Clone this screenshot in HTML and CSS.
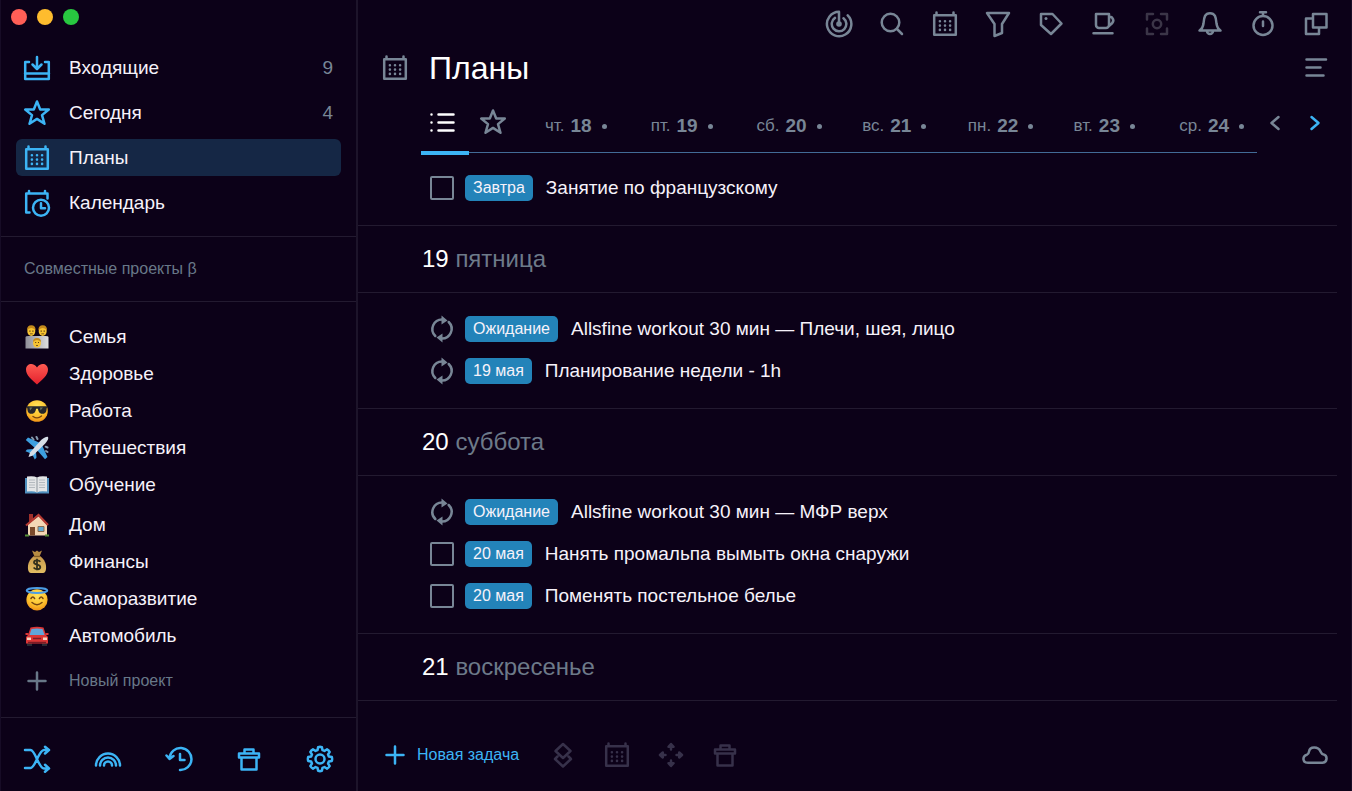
FILE: index.html
```html
<!DOCTYPE html>
<html lang="ru">
<head>
<meta charset="utf-8">
<meta name="viewport" content="width=device-width, initial-scale=1">
<title>Планы</title>
<link rel="stylesheet" href="styles.css">
</head>
<body>
<svg class="sprite" aria-hidden="true">
  <defs>
    <radialGradient id="g-face" cx=".5" cy=".3" r=".75"><stop offset="0" stop-color="#ffe45c"/><stop offset=".6" stop-color="#fdc12d"/><stop offset="1" stop-color="#ee8b13"/></radialGradient>
    <linearGradient id="g-heart" x2="0" y2="1"><stop offset="0" stop-color="#ff5b52"/><stop offset="1" stop-color="#e2202c"/></linearGradient>
    <linearGradient id="g-box" x2="1" y2="0"><stop offset="0" stop-color="#8f8f98"/><stop offset="1" stop-color="#dededf"/></linearGradient>
    <linearGradient id="g-bag" x2="0" y2="1"><stop offset="0" stop-color="#c99a4c"/><stop offset="1" stop-color="#e2bd62"/></linearGradient>
  </defs>
  <symbol id="i-inbox" viewBox="0 0 28 28"><path d="M6 8H2.200v17h23.600V8H22M2 19.500h24M14 3v11.500M9.500 10.500l4.500 4.500 4.500-4.500"/></symbol>
  <symbol id="i-star" viewBox="0 0 28 28"><path d="M14 2.500l3.200 8h8.600l-6.800 5.600 2.500 8.700-7.500-4.900-7.500 4.900L9 16.100 2.200 10.500h8.600z"/></symbol>
  <symbol id="i-calendar" viewBox="0 0 28 28"><path d="M3.200 5.200h21.600v19.600H3.200zM5.500 5V2.500M22.500 5V2.500"/><path class="dots" d="M8.900 11.300h0M14 11.300h0M19.100 11.300h0M8.900 15.600h0M14 15.600h0M19.100 15.600h0M8.900 19.900h0M14 19.900h0M19.100 19.900h0"/></symbol>
  <symbol id="i-clockcal" viewBox="0 0 28 28"><path d="M6.500 23.500H3.200V4.500h21.300v5M6 4.500V2M22 4.500V2"/><circle cx="18" cy="18.700" r="8"/><path d="M18 14.300v5h4"/></symbol>
  <symbol id="i-plus" viewBox="0 0 28 28"><path d="M14 5.500v17M5.500 14h17"/></symbol>
  <symbol id="i-shuffle" viewBox="0 0 28 28"><path d="M2 5h5.500c5 0 8 18.500 13.500 18.500h5M2 23h5.500C12.500 23 15.500 5 21 5h5M22 1.800L26 5l-4 3.500M22 19.800l4 3.600-4 3.400"/></symbol>
  <symbol id="i-rainbow" viewBox="0 0 28 28"><path d="M2 20.500a12 12 0 0 1 24 0M6 20.500a8 8 0 0 1 16 0M10 20.500a4 4 0 0 1 8 0"/></symbol>
  <symbol id="i-history" viewBox="0 0 28 28"><path d="M4.500 13a11 11 0 1 1 10.500 12M1.500 10.500l3 3.500L8.500 11M15 9v6h4.500"/></symbol>
  <symbol id="i-trash" viewBox="0 0 28 28"><path d="M4 8.500h20v4H4zM6.500 13v11.500h15V13M9.500 8V4.500h9V8"/></symbol>
  <symbol id="i-gear" viewBox="0 0 28 28"><path d="M12.100 2.150Q14 1.600 15.900 2.150L16.500 5.150 18.460 5.950 21.050 4.300Q22.800 5.200 23.700 6.950L22.050 9.540 22.850 11.500 25.850 12.100Q26.400 14 25.850 15.900L22.850 16.500 22.050 18.460 23.700 21.050Q22.800 22.800 21.050 23.700L18.460 22.050 16.500 22.850 15.900 25.850Q14 26.400 12.100 25.850L11.500 22.850 9.540 22.050 6.950 23.700Q5.200 22.800 4.300 21.050L5.950 18.460 5.150 16.500 2.150 15.900Q1.600 14 2.150 12.100L5.150 11.500 5.950 9.540 4.300 6.950Q5.200 5.200 6.950 4.300L9.540 5.950 11.500 5.150z"/><circle cx="14" cy="14" r="4.500"/></symbol>
  <symbol id="i-focus" viewBox="0 0 28 28"><path d="M22.700 5.300A12.200 12.200 0 1 1 14 1.800V14M18.500 8.200A7.300 7.300 0 1 1 10 7.900"/><circle class="solid" cx="14" cy="14" r="2.800"/></symbol>
  <symbol id="i-search" viewBox="0 0 28 28"><circle cx="12.500" cy="12.500" r="8.800"/><path d="M19 19l5 5"/></symbol>
  <symbol id="i-filter" viewBox="0 0 28 28"><path d="M3 3h22l-7 11v9l-7.500 3V14z"/></symbol>
  <symbol id="i-tag" viewBox="0 0 28 28"><path d="M4 4h11.500l9 9.500L14 24 4 15z"/><circle class="solid" cx="9" cy="8.500" r="1.500"/></symbol>
  <symbol id="i-cup" viewBox="0 0 28 28"><path d="M6 4h13v11a3 3 0 0 1-3 3H9a3 3 0 0 1-3-3zM19 6.200l3 1.300q2.500 2.700.300 5.500L19 16M3.500 23.300h19"/></symbol>
  <symbol id="i-scan" viewBox="0 0 28 28"><path d="M4 9.500V4h6M18 4h6v5.500M24 18.500V24h-6M10 24H4v-5.500"/><circle cx="14" cy="14" r="4.200"/></symbol>
  <symbol id="i-bell" viewBox="0 0 28 28"><path d="M3.500 20.500c2.500-1.500 3.500-3.500 4-7C8 7 9 3.200 14 3.200S20 7 20.500 13.500c.500 3.500 1.500 5.500 4 7zM11 21a3 3 0 0 0 6 0"/></symbol>
  <symbol id="i-timer" viewBox="0 0 28 28"><circle cx="14" cy="15.500" r="9.500"/><path d="M14 11.500v4.500M11 2.300h6M14 2.500v3"/></symbol>
  <symbol id="i-windows" viewBox="0 0 28 28"><path d="M11 4h13.500v13.500H11zM10.500 8.500H4V24h13v-6"/></symbol>
  <symbol id="i-lines" viewBox="0 0 28 28"><path d="M4.500 5.500h19.500M4.500 13.500h14M4.500 21.500h17"/></symbol>
  <symbol id="i-list" viewBox="0 0 28 28"><path d="M10.500 6.500h15M10.500 14.500h15M10.500 22.500h15M3.500 6.500h0M3.500 14.500h0M3.500 22.500h0"/></symbol>
  <symbol id="i-prev" viewBox="0 0 28 28"><path d="M17.500 8l-7 6 7 6"/></symbol>
  <symbol id="i-next" viewBox="0 0 28 28"><path d="M10.500 8l7 6-7 6"/></symbol>
  <symbol id="i-repeat" viewBox="0 0 28 28"><path d="M14.500 4.400A9.700 9.700 0 0 0 7.300 21M20.700 7A9.700 9.700 0 0 1 13.500 23.600"/><path class="solid" d="M13.500.6L19.500 5.500 13.500 9.500zM14.500 27.400L8.500 22.500 14.500 18.500z"/></symbol>
  <symbol id="i-layers" viewBox="0 0 28 28"><path d="M14 3l7.500 7-7.500 7-7.500-7zM8.500 15.500L6 18l8 7.500L22 18l-2.500-2.500"/></symbol>
  <symbol id="i-move" viewBox="0 0 28 28"><path d="M14 8.500V4M14 19.500V24M8.500 14H4M19.500 14H24M11.500 5.800L14 3l2.500 2.800zM11.500 22.200L14 25l2.500-2.800zM5.800 11.500L3 14l2.800 2.500zM22.200 11.500L25 14l-2.800 2.500z"/></symbol>
  <symbol id="i-cloud" viewBox="0 0 28 28"><path d="M7 21.800h14.500a4.300 4.300 0 0 0 1-8.400c-2 0-2-1.300-3-3-2.200-4.800-10.500-5.500-11.500.200-.3 2.200-.5 2.200-2 3C.8 15.300 1.500 21.800 7 21.800z"/></symbol>

  <symbol id="e-family" viewBox="0 0 24 24"><path fill="url(#g-box)" d="M.5 12q0-1 3-1h17q3 0 3 1v11.500H.5z"/><g fill="#f7c331"><ellipse cx="6.300" cy="6" rx="4" ry="5"/><ellipse cx="17.700" cy="6" rx="4" ry="5"/><ellipse cx="12" cy="18" rx="4" ry="4.500"/></g><path fill="#c48a1c" d="M2 5Q2 .3 6.300.3T10.600 5Q8 3 6.300 3T2 5zM13.400 5Q13.400.3 17.700.3T22 5q-2.600-2-4.300-2T13.400 5zM8 17q0-4 4-4t4 4q-2-2-4-2t-4 2z"/><g fill="#5c3b12"><path d="M4.300 5.500h1.200v1.200H4.300zM7.300 5.500h1.200v1.200H7.300zM15.600 5.500h1.200v1.200h-1.200zM18.600 5.500h1.200v1.200h-1.200zM10.200 17h1v1h-1zM13 17h1v1h-1zM5 8.500h2.800v.8H5zM16.300 8.500h2.800v.8h-2.800zM11 20h2v.8h-2z"/></g></symbol>
  <symbol id="e-heart" viewBox="0 0 24 24"><path fill="url(#g-heart)" d="M12 22.500C7 18 1 13.500 1 7.500 1 1 9 0 12 5.500 15 0 23 1 23 7.500c0 6-6 10.500-11 15z"/></symbol>
  <symbol id="e-cool" viewBox="0 0 24 24"><circle cx="12" cy="12" r="10.800" fill="url(#g-face)"/><path fill="#25262b" d="M1.500 7.200h21l-.8 2.200c-.3 4.400-2 5.400-4.500 5.400-2.800 0-3.700-2.300-4.300-5h-1.800c-.6 2.700-1.500 5-4.300 5-2.500 0-4.200-1-4.500-5.400z"/><path fill="#66705d" d="M4.500 8.500h3l-2.500 3zM15 8.500h3l-2.500 3z"/><path fill="none" stroke="#7a4511" stroke-width="1.400" stroke-linecap="round" d="M8 17.500q4.500 3 8.500-.5"/></symbol>
  <symbol id="e-plane" viewBox="0 0 24 24"><path fill="#3d9fe0" d="M15 7L3 1.500.8 4 10 12zM17 9L22.500 21l-2.500 2.200L12 14zM8 13L2 13.500.5 15.200 6 17.500zM11 16l.5 5.500-1.700 2L7 18z"/><path fill="#d5dde7" d="M23 1c1 2-1.500 5.200-3.500 7.300L8 19.500l-4.500 1.500L5 16.500 15.200 5C17.200 2.800 21 0 23 1z"/><path stroke="#8598ad" stroke-width="2" stroke-linecap="round" d="M7 1.500l1.500 2M11.500 1l1 2M22.500 11.500l-1.800-.8M22.500 16l-1.500-1"/></symbol>
  <symbol id="e-book" viewBox="0 0 24 24"><path fill="#4f8fbd" d="M0 5h24v15.500H0z"/><path fill="#e3e5e6" d="M2 3.500q7-1 10 1 3-2 10-1v15q-7-1-10 1-3-2-10-1z"/><path stroke="#b4babf" fill="none" d="M4 7h6M4 9.500h6M4 12h6M4 14.500h6M14 7h6M14 9.500h6M14 12h6M14 14.500h6"/><path stroke="#8b949b" d="M12 4.500V19"/></symbol>
  <symbol id="e-house" viewBox="0 0 24 24"><path fill="#9f302b" d="M4 1h4v8H4z"/><path fill="#f4d7b5" d="M3 11L14 3l8 9v10.500H3z"/><path fill="none" stroke="#b53a32" stroke-width="2.200" d="M1 12.500L13.500 2 23 12"/><path fill="#7b4a2b" d="M5 14h5v8.500H5z"/><path fill="#62acd3" stroke="#8d6d52" d="M13 13.500h6v5h-6z"/><path stroke="#579039" stroke-width="2" d="M0 22.500h4M20 22.500h4"/></symbol>
  <symbol id="e-bag" viewBox="0 0 24 24"><path fill="#b78b42" d="M7 .5l3 1.500 2-1.500 2 1.500 3-1.500-2.500 6h-5z"/><path fill="url(#g-bag)" d="M9 6h6c5 4 6.500 8 6 13q-.5 4-3 4H6q-2.500 0-3-4c-.5-5 1-9 6-13z"/><path stroke="#855e26" stroke-width="1.300" d="M9 6.500h6"/><path fill="none" stroke="#31301d" stroke-width="1.800" d="M15.300 11.800C14 9.800 9 9.800 9 12.500s6.300 1.500 6.300 4.500-5 2.800-6.700.5M12 8.800v11.500"/></symbol>
  <symbol id="e-halo" viewBox="0 0 24 24"><circle cx="12" cy="12.800" r="10.600" fill="url(#g-face)"/><ellipse cx="12" cy="3.500" rx="10.300" ry="2.400" fill="none" stroke="#4c9de4" stroke-width="2"/><path fill="none" stroke="#754510" stroke-width="1.500" stroke-linecap="round" d="M6 11.500q1.800-2.800 3.600 0M14.400 11.500q1.800-2.800 3.600 0M7 15.500q5 4.500 10 0"/></symbol>
  <symbol id="e-car" viewBox="0 0 24 24"><path fill="#292b35" d="M2 18h5v4H2zM17 18h5v4h-5z"/><path fill="#db3636" d="M5.500 3.500Q12 2 18.500 3.500L21 11l2 2v6.500H1V13l2-2z"/><path fill="#60a6db" d="M6.500 5Q12 4 17.500 5l2 6h-15z"/><path fill="#f8d4be" d="M2 13.500h4v2.500H2zM18 13.500h4v2.500h-4z"/><path stroke="#7b1c26" stroke-width="1.500" d="M8 14.500h8M3 18.500h18"/><path fill="#db3636" d="M.5 9h3v2h-3zM20.500 9h3v2h-3z"/></symbol>
</svg>

<div class="window">
  <aside class="sidebar">
    <div class="lights"><button class="light close" aria-label="Закрыть"></button><button class="light min" aria-label="Свернуть"></button><button class="light max" aria-label="Развернуть"></button></div>
    <nav class="nav">
      <a class="item" href="#"><svg class="icon"><use href="#i-inbox"/></svg><span>Входящие</span><span class="count">9</span></a>
      <a class="item" href="#"><svg class="icon"><use href="#i-star"/></svg><span>Сегодня</span><span class="count">4</span></a>
      <a class="item current" href="#" aria-current="page"><svg class="icon"><use href="#i-calendar"/></svg><span>Планы</span></a>
      <a class="item" href="#"><svg class="icon"><use href="#i-clockcal"/></svg><span>Календарь</span></a>
    </nav>
    <h2 class="shared">Совместные проекты β</h2>
    <div class="projects">
      <nav class="group">
        <a class="project" href="#"><svg class="emoji"><use href="#e-family"/></svg>Семья</a>
        <a class="project" href="#"><svg class="emoji"><use href="#e-heart"/></svg>Здоровье</a>
        <a class="project" href="#"><svg class="emoji"><use href="#e-cool"/></svg>Работа</a>
        <a class="project" href="#"><svg class="emoji"><use href="#e-plane"/></svg>Путешествия</a>
        <a class="project" href="#"><svg class="emoji"><use href="#e-book"/></svg>Обучение</a>
      </nav>
      <nav class="group">
        <a class="project" href="#"><svg class="emoji"><use href="#e-house"/></svg>Дом</a>
        <a class="project" href="#"><svg class="emoji"><use href="#e-bag"/></svg>Финансы</a>
        <a class="project" href="#"><svg class="emoji"><use href="#e-halo"/></svg>Саморазвитие</a>
        <a class="project" href="#"><svg class="emoji"><use href="#e-car"/></svg>Автомобиль</a>
      </nav>
      <button class="new-project"><svg class="icon"><use href="#i-plus"/></svg>Новый проект</button>
    </div>
    <footer class="side-foot">
      <button aria-label="Перемешать"><svg class="icon"><use href="#i-shuffle"/></svg></button>
      <button aria-label="Радуга"><svg class="icon"><use href="#i-rainbow"/></svg></button>
      <button aria-label="История"><svg class="icon"><use href="#i-history"/></svg></button>
      <button aria-label="Корзина"><svg class="icon"><use href="#i-trash"/></svg></button>
      <button aria-label="Настройки"><svg class="icon"><use href="#i-gear"/></svg></button>
    </footer>
  </aside>

  <main class="main">
    <div class="toolbar">
      <button aria-label="Фокус"><svg class="icon"><use href="#i-focus"/></svg></button>
      <button aria-label="Поиск"><svg class="icon"><use href="#i-search"/></svg></button>
      <button aria-label="Календарь"><svg class="icon"><use href="#i-calendar"/></svg></button>
      <button aria-label="Фильтр"><svg class="icon"><use href="#i-filter"/></svg></button>
      <button aria-label="Метки"><svg class="icon"><use href="#i-tag"/></svg></button>
      <button aria-label="Перерыв"><svg class="icon"><use href="#i-cup"/></svg></button>
      <button aria-label="Выделение" disabled><svg class="icon"><use href="#i-scan"/></svg></button>
      <button aria-label="Уведомления"><svg class="icon"><use href="#i-bell"/></svg></button>
      <button aria-label="Таймер"><svg class="icon"><use href="#i-timer"/></svg></button>
      <button aria-label="Окна"><svg class="icon"><use href="#i-windows"/></svg></button>
    </div>
    <header class="title">
      <svg class="icon"><use href="#i-calendar"/></svg>
      <h1>Планы</h1>
      <button aria-label="Меню"><svg class="icon"><use href="#i-lines"/></svg></button>
    </header>
    <div class="days">
      <div class="tabs">
        <button class="tab active" aria-label="Список"><svg class="icon"><use href="#i-list"/></svg></button>
        <button class="tab" aria-label="Сегодня"><svg class="icon"><use href="#i-star"/></svg></button>
        <button class="day">чт. <b>18</b><i></i></button>
        <button class="day">пт. <b>19</b><i></i></button>
        <button class="day">сб. <b>20</b><i></i></button>
        <button class="day">вс. <b>21</b><i></i></button>
        <button class="day">пн. <b>22</b><i></i></button>
        <button class="day">вт. <b>23</b><i></i></button>
        <button class="day">ср. <b>24</b><i></i></button>
      </div>
      <div class="arrows">
        <button aria-label="Назад"><svg class="icon"><use href="#i-prev"/></svg></button>
        <button class="next" aria-label="Вперёд"><svg class="icon"><use href="#i-next"/></svg></button>
      </div>
    </div>
    <div class="agenda">
      <ul class="tasks">
        <li><label><input type="checkbox"><span class="badge">Завтра</span>Занятие по французскому</label></li>
      </ul>
      <h2 class="date">19 <span>пятница</span></h2>
      <ul class="tasks">
        <li><svg class="icon"><use href="#i-repeat"/></svg><span class="badge">Ожидание</span>Allsfine workout 30 мин — Плечи, шея, лицо</li>
        <li><svg class="icon"><use href="#i-repeat"/></svg><span class="badge">19 мая</span>Планирование недели - 1h</li>
      </ul>
      <h2 class="date">20 <span>суббота</span></h2>
      <ul class="tasks">
        <li><svg class="icon"><use href="#i-repeat"/></svg><span class="badge">Ожидание</span>Allsfine workout 30 мин — МФР верх</li>
        <li><label><input type="checkbox"><span class="badge">20 мая</span>Нанять промальпа вымыть окна снаружи</label></li>
        <li><label><input type="checkbox"><span class="badge">20 мая</span>Поменять постельное белье</label></li>
      </ul>
      <h2 class="date">21 <span>воскресенье</span></h2>
    </div>
    <footer class="main-foot">
      <button class="new-task"><svg class="icon"><use href="#i-plus"/></svg>Новая задача</button>
      <button aria-label="Слои" disabled><svg class="icon"><use href="#i-layers"/></svg></button>
      <button aria-label="Дата" disabled><svg class="icon"><use href="#i-calendar"/></svg></button>
      <button aria-label="Переместить" disabled><svg class="icon"><use href="#i-move"/></svg></button>
      <button aria-label="Удалить" disabled><svg class="icon"><use href="#i-trash"/></svg></button>
      <button class="cloud" aria-label="Синхронизация"><svg class="icon"><use href="#i-cloud"/></svg></button>
    </footer>
  </main>
</div>
</body>
</html>
```

FILE: styles.css
```css
:root {
  --bg: #0c0118;
  --line: #231a30;
  --blue: #3cb4f5;
  --muted: #788696;
  --text: #f6f2fa;
}

* { box-sizing: border-box; }

body {
  margin: 0;
  background: var(--bg);
  color: var(--text);
  font-family: "Liberation Sans", Arial, sans-serif;
  font-size: 19px;
  line-height: 24px;
}

button {
  display: flex;
  align-items: center;
  padding: 0;
  border: 0;
  background: none;
  color: inherit;
  font: inherit;
}

a { color: inherit; text-decoration: none; }
h1, h2 { margin: 0; font-weight: 400; }
ul { margin: 0; padding: 0; list-style: none; }

.sprite { position: absolute; width: 0; height: 0; }

.icon {
  flex: none;
  display: block;
  width: 28px;
  height: 28px;
  fill: none;
  stroke: currentColor;
  stroke-width: 2.5;
  stroke-linecap: round;
  stroke-linejoin: round;
}

.dots { stroke-width: 2.6; }
.solid { fill: currentColor; stroke: none; }

.window {
  display: flex;
  min-height: 100vh;
  border-right: 1px solid #170c26;
}

/* Sidebar */
.sidebar {
  flex: none;
  display: flex;
  flex-direction: column;
  width: 358px;
  border-left: 1px solid #170c26;
  border-right: 2px solid #1d142a;
}

.lights { display: flex; gap: 10px; padding: 9px 0 0 10px; }
.light { width: 16px; height: 16px; border-radius: 50%; }
.close { background: #ff5f57; }
.min { background: #febc2e; }
.max { background: #28c840; }

.nav {
  display: flex;
  flex-direction: column;
  gap: 8px;
  padding: 24px 15px 15px;
}

.item {
  display: flex;
  align-items: center;
  gap: 18px;
  height: 37px;
  padding: 0 8px 0 7px;
  border-radius: 6px;
}

.item .icon { color: var(--blue); }
.item.current { background: #152745; }
.count { margin-left: auto; color: var(--muted); }

.shared {
  padding: 20px 23px;
  border-top: 1px solid var(--line);
  border-bottom: 1px solid var(--line);
  color: #687888;
  font-size: 16px;
}

.projects {
  flex: 1;
  display: flex;
  flex-direction: column;
  gap: 3px;
  padding: 16px 22px 12px;
}

.project {
  display: flex;
  align-items: center;
  gap: 20px;
  height: 37px;
  padding-left: 2px;
}

.emoji { width: 24px; height: 24px; }

.new-project {
  gap: 18px;
  height: 48px;
  color: #687888;
  font-size: 16px;
}

.side-foot {
  display: flex;
  justify-content: space-between;
  padding: 27px 22px 18px;
  border-top: 1px solid var(--line);
  color: var(--blue);
}

/* Main column */
.main {
  flex: 1;
  display: flex;
  flex-direction: column;
  min-width: 0;
  color: var(--text);
}

.toolbar {
  display: flex;
  justify-content: flex-end;
  gap: 25px;
  padding: 10px 21px 6px;
  color: var(--muted);
}

.toolbar button:disabled { color: #3b3547; }

.title {
  display: flex;
  align-items: center;
  gap: 20px;
  height: 48px;
  padding: 0 21px 0 23px;
  color: var(--muted);
}

.title h1 { color: #fff; font-size: 32px; line-height: 40px; }
.title button { margin-left: auto; }

.days { display: flex; padding: 0 22px 0 63px; }

.tabs {
  flex: 1;
  display: grid;
  grid-template-columns: 48px 48px repeat(7, 1fr);
  height: 61px;
  border-bottom: 1px solid #426b96;
  color: var(--muted);
}

.tab { position: relative; justify-content: center; }
.tab.active { justify-content: flex-start; padding-left: 7px; color: #fff; }

.tab.active::after {
  position: absolute;
  right: 0;
  bottom: -3px;
  left: 0;
  height: 4px;
  background: var(--blue);
  content: "";
}

.day {
  gap: 6px;
  padding: 8px 0 0 28px;
  font-size: 17px;
}

.day b { font-size: 19px; }
.day i { width: 5px; height: 5px; margin-left: 4px; border-radius: 50%; background: var(--muted); }

.arrows { display: flex; gap: 12px; padding-left: 4px; color: var(--muted); }
.next { color: var(--blue); }

.agenda { flex: 1; padding: 0 14px 0 0; }

.tasks { padding: 15px 0 16px 70px; }
.agenda > .tasks:first-child { padding-top: 14px; }

.tasks li, .tasks label { display: flex; align-items: center; }
.tasks li { height: 42px; }
.tasks .icon { color: var(--muted); }

.tasks input {
  appearance: none;
  width: 24px;
  height: 24px;
  margin: 0 2px;
  border: 2px solid var(--muted);
  border-radius: 2px;
}

.badge {
  margin: 0 13px 0 9px;
  padding: 1px 8px;
  border-radius: 5px;
  background: #2383b9;
  font-size: 16px;
}

.date {
  padding: 18px 64px;
  border-top: 1px solid var(--line);
  border-bottom: 1px solid var(--line);
  color: #fff;
  font-size: 24px;
  line-height: 30px;
}

.date span { color: #6d7a89; }

.main-foot {
  display: flex;
  align-items: center;
  gap: 26px;
  padding: 22px 22px;
  color: #37314a;
}

.new-task { gap: 8px; margin: 0 4px 0 1px; color: var(--blue); font-size: 16px; }
.cloud { margin-left: auto; color: var(--muted); }
```
